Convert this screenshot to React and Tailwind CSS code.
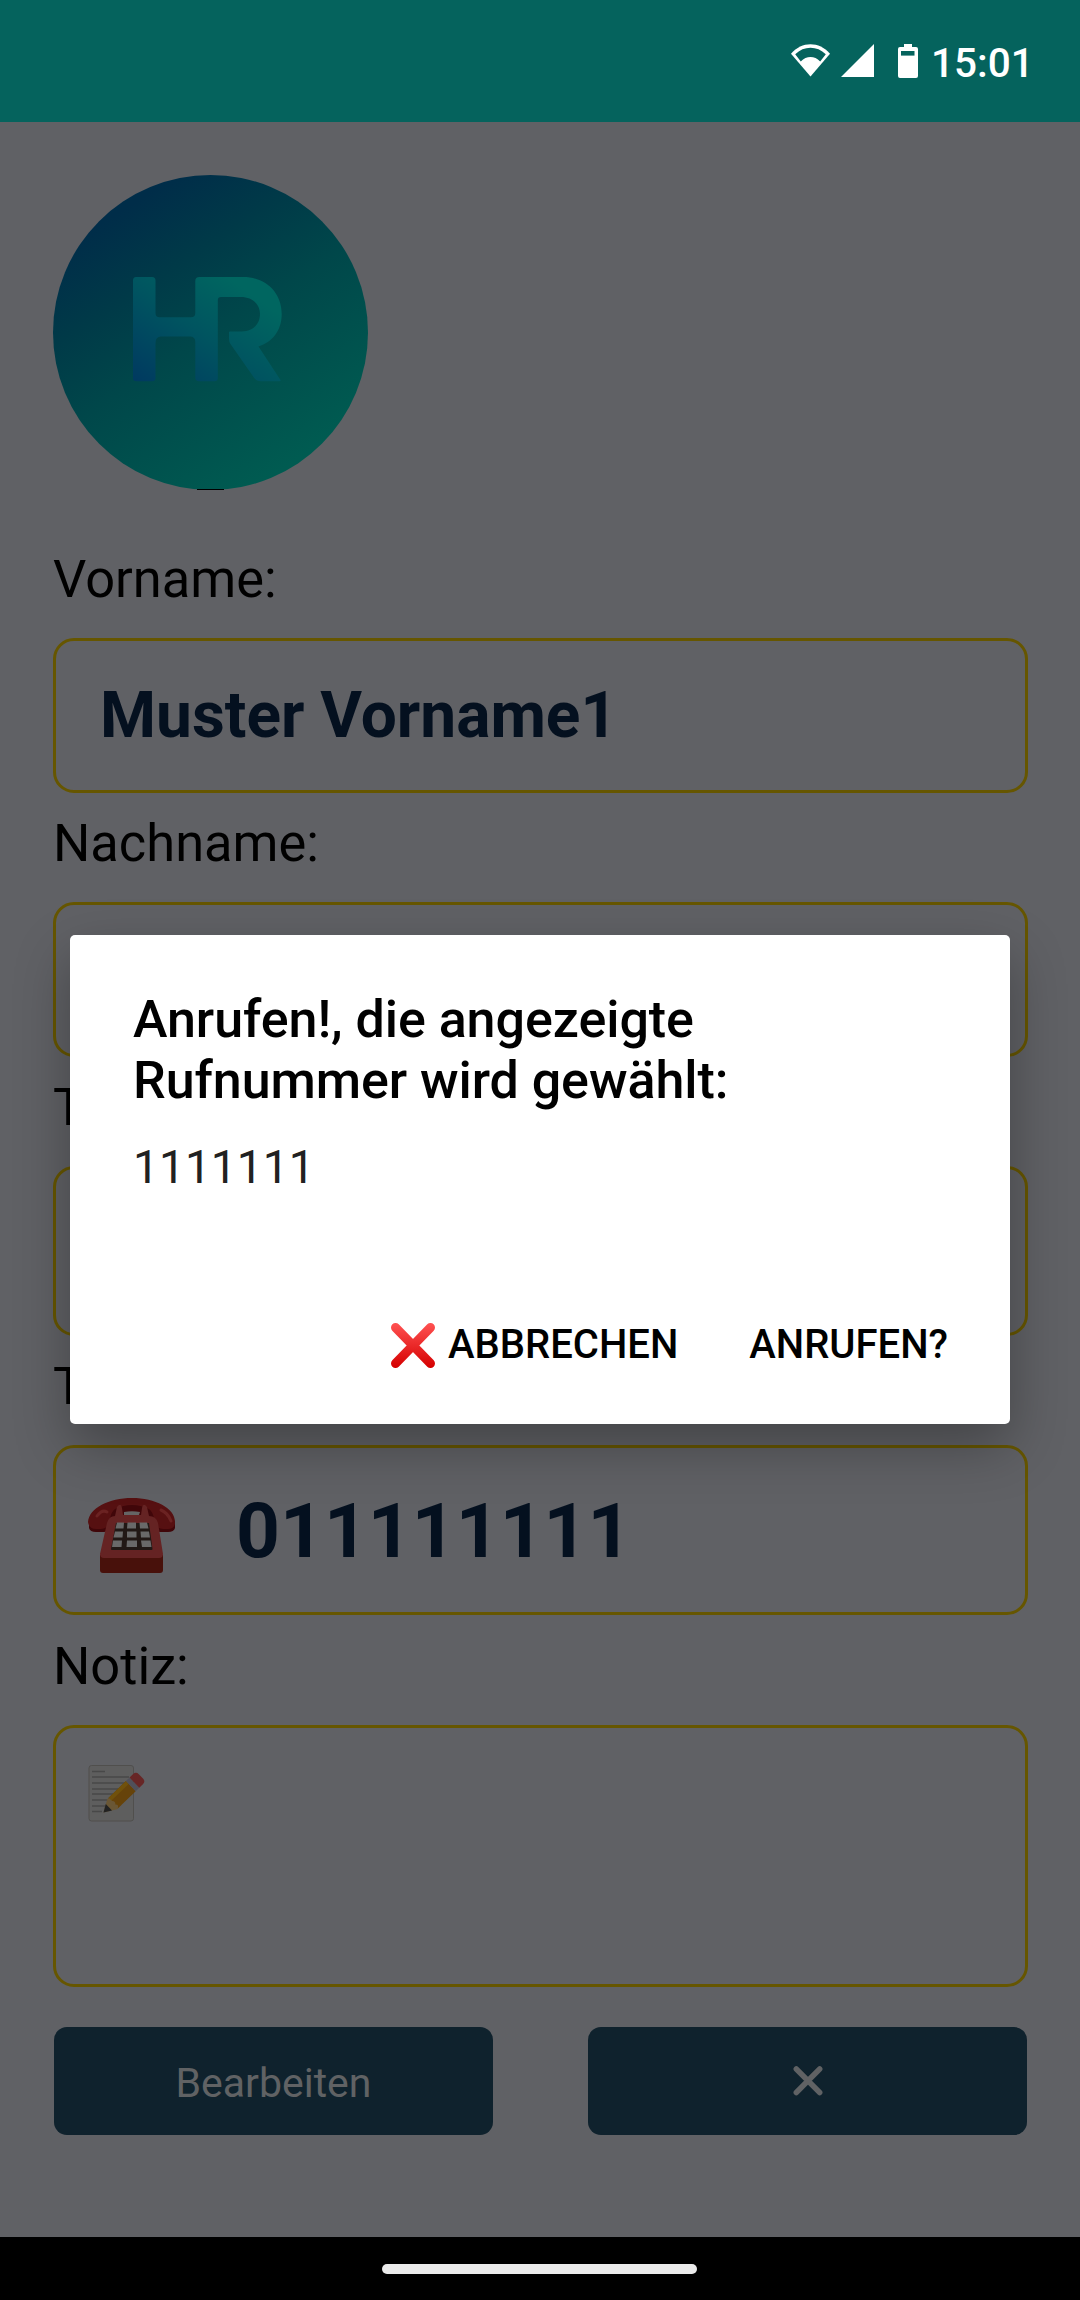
const LABEL = "text-[52.4px] leading-[62px] text-black";
const FIELD = "rounded-[21px] border-[3px] border-[#665600]";

function Wifi() {
  return (
    <svg width="39" height="34" viewBox="0 0 39 34" fill="none">
      <path d="M19.5 32.5 L0 9.8 C11 -2.8 28 -2.8 39 9.8 Z" fill="white" />
      <path d="M9.8 17.5 L4.2 10.3 C13 1.7 26 1.7 34.8 10.3 L29.2 17.5 C23.5 11.6 15.5 11.6 9.8 17.5 Z" fill="#05635d" />
    </svg>
  );
}

function Battery() {
  return (
    <svg width="20" height="34" viewBox="0 0 20 34">
      <path d="M6 0H14V3H18Q20 3 20 5V32Q20 34 18 34H2Q0 34 0 32V5Q0 3 2 3H6Z" fill="white" />
      <rect x="3" y="7" width="13.5" height="4.6" fill="#05635d" />
    </svg>
  );
}

function Logo() {
  return (
    <svg width="315" height="315" viewBox="0 0 315 315">
      <defs>
        <linearGradient id="disc" gradientUnits="userSpaceOnUse" x1="70" y1="35" x2="235" y2="290">
          <stop offset="0" stopColor="#002d49" />
          <stop offset="0.25" stopColor="#003a48" />
          <stop offset="0.5" stopColor="#00474a" />
          <stop offset="1" stopColor="#005b51" />
        </linearGradient>
        <linearGradient id="mono" gradientUnits="userSpaceOnUse" x1="85" y1="207" x2="165" y2="95">
          <stop offset="0" stopColor="#003a60" />
          <stop offset="0.55" stopColor="#005460" />
          <stop offset="1" stopColor="#006660" />
        </linearGradient>
      </defs>
      <circle cx="157.500" cy="157.500" r="157.500" fill="url(#disc)" />
      <rect x="144" y="314" width="27" height="1" fill="black" />
      <path
        fill="url(#mono)"
        d="M83 102H99Q102.500 102 102.500 105.500V138Q102.500 142.300 106.500 142.300H138Q142.300 142.300 142.300 138V106Q142.300 102 146.500 102H190C212 102 228.700 117 228.700 139C228.700 156 219 167 205.500 171.500L227.500 205Q228 206.300 226.500 206.300H208Q203 206.300 200.500 202L177.500 169Q176 166.500 176 164V157Q176 156.500 177 156.500H189C200 156.500 207 149 207 139C207 129 199 122 188 122H168Q164.800 122 164.800 125V203Q164.800 206.300 161.500 206.300H146Q142.300 206.300 142.300 202.500V167Q142.300 161.500 137 161.500H108Q102.500 161.500 102.500 168V203Q102.500 206.300 99 206.300H83.500Q80 206.300 80 203V105.500Q80 102 83 102Z"
      />
    </svg>
  );
}

function Phone() {
  return (
    <svg width="88" height="76" viewBox="0 0 88 76">
      <path d="M12 57H75V72Q75 75 72 75H15Q12 75 12 72Z" fill="#48110b" />
      <path d="M44 1C67 1 87 12 87 27V30Q86 34 80 34H72Q66 34 64 27L60 18H28L24 27Q22 34 16 34H8Q2 34 1 30V27C1 12 21 1 44 1Z" fill="#400609" />
      <path d="M44 0C67 0 87 10 87 24Q87 31 80 31H75Q66 30 66 21Q65 14 61 11Q44 3 27 11Q23 14 22 21Q22 30 13 31H8Q1 31 0 24C1 10 21 0 44 0Z" fill="#561011" />
      <path d="M9 18Q14 11 19 14M83 23Q80 15 73 12" stroke="#6b2222" strokeWidth="3" strokeLinecap="round" fill="none" />
      <path d="M27 18L29 9Q33 4 34 10L35 17H53L54 10Q55 4 59 9L61 18Q68 18 70 25L75 56Q75 60 71 60H16Q12 60 12 56L19 25Q21 18 27 18Z" fill="#652323" />
      <path d="M36 14Q44 12.500 52 14L51 17H36Z" fill="#656565" />
      <path d="M28 25H61L64.500 51Q64.500 52 63.500 52H24Q23 52 23 51Z" fill="#211815" />
      <path d="M29 24.500H36L35.500 30.500H27.500ZM39.500 24.500H48V30.500H39ZM51.500 24.500H59L60.500 30.500H52ZM27 33.500H35L34.500 39.500H25.500ZM39 33.500H48.500V39.500H39ZM52.500 33.500H61L62 39.500H53ZM25 42.500H34L33.500 49H24ZM39 42.500H49V49H38.500ZM53 42.500H62.500L63.500 49H54Z" fill="#696969" />
    </svg>
  );
}

function Memo() {
  return (
    <svg width="60" height="60" viewBox="0 0 60 60">
      <rect x="1" y="1.500" width="44.500" height="55.500" rx="2.500" fill="#5e5e5e" stroke="#504f4d" />
      <path d="M4 7.500H17M4 13H41M4 19H38M4 25H32M4 30H26M4 36H20M4 42H19M4 47.500H14" stroke="#484848" strokeWidth="1.500" />
      <g transform="translate(15.500 48.500) rotate(-44)">
        <path d="M0 0L12 -7H18V7H12Z" fill="#6a5735" />
        <path d="M0 0L7.500 -4.500V4.500Z" fill="#222" />
        <path d="M13 -7H38V7H13Q17 5 14 2.500Q17 0 14 -2.500Q17 -5 13 -7Z" fill="#66430a" />
        <path d="M14 -7H38V-3H14Z" fill="#70510b" />
        <rect x="38" y="-7" width="5" height="14" fill="#50505a" />
        <path d="M43 -7H48Q52 -7 52 -3V3Q52 7 48 7H43Z" fill="#672626" />
      </g>
    </svg>
  );
}

function RedCross() {
  return (
    <svg width="44" height="45" viewBox="0 0 44 45">
      <defs>
        <linearGradient id="cross" gradientUnits="userSpaceOnUse" x1="0" y1="0" x2="0" y2="45">
          <stop offset="0" stopColor="#ff5252" />
          <stop offset="1" stopColor="#d50000" />
        </linearGradient>
      </defs>
      <path d="M4.500 4.500L39.500 40.500M39.500 4.500L4.500 40.500" stroke="url(#cross)" strokeWidth="9" strokeLinecap="round" />
    </svg>
  );
}

export default function App() {
  return (
    <div className="relative flex h-[2300px] w-[1080px] flex-col overflow-hidden bg-[#606165] font-['Roboto',sans-serif]">
      <header className="flex h-[122px] shrink-0 items-start bg-[#05635d] pl-[791px] text-white">
        <div className="mt-[44px]"><Wifi /></div>
        <svg className="mt-[44px] ml-[11px]" width="33" height="33" viewBox="0 0 33 33">
          <path d="M0 33L33 0V33Z" fill="white" />
        </svg>
        <div className="mt-[44px] ml-[24px]"><Battery /></div>
        <span className="mt-[39px] ml-[13px] text-[40.5px] leading-[48px] font-medium">15:01</span>
      </header>

      <main className="flex grow flex-col pt-[53px] pr-[52px] pl-[53px]">
        <Logo />
        <div className={`mt-[58px] ${LABEL}`}>Vorname:</div>
        <div className={`mt-[28px] flex h-[155px] items-center pl-[44px] text-[64px] font-bold text-[#04101f] ${FIELD}`}>
          Muster Vorname1
        </div>
        <div className={`mt-[19px] ${LABEL}`}>Nachname:</div>
        <div className={`mt-[28px] h-[155px] ${FIELD}`} />
        <div className={`mt-[19px] ${LABEL}`}>T</div>
        <div className={`mt-[28px] h-[170px] ${FIELD}`} />
        <div className={`mt-[19px] ${LABEL}`}>T</div>
        <div className={`mt-[28px] flex h-[170px] items-center pl-[32px] ${FIELD}`}>
          <div className="pt-[12px]"><Phone /></div>
          <span className="ml-[60px] pt-[2px] text-[76.6px] font-bold text-[#04101f]">011111111</span>
        </div>
        <div className={`mt-[20px] ${LABEL}`}>Notiz:</div>
        <div className={`mt-[28px] h-[262px] pt-[36px] pl-[32px] ${FIELD}`}>
          <Memo />
        </div>
        <div className="mt-[40px] grid grid-cols-2 gap-x-[95px] px-px text-[41px] text-[#606264]">
          <div className="flex h-[108px] items-center justify-center rounded-[13px] bg-[#0f222d] pt-[5px]">Bearbeiten</div>
          <div className="flex h-[108px] items-center justify-center rounded-[13px] bg-[#0f222d]">
            <svg width="30" height="30" viewBox="0 0 30 30">
              <path d="M3.300 3L26.700 26.500M26.700 3L3.300 26.500" stroke="currentColor" strokeWidth="5.500" strokeLinecap="round" />
            </svg>
          </div>
        </div>
      </main>

      <footer className="h-[63px] shrink-0 bg-black pt-[27px] pl-[382px]">
        <div className="h-[10px] w-[315px] rounded-full bg-[#ebebeb]" />
      </footer>

      <section className="absolute top-[935px] left-[70px] flex h-[489px] w-[940px] flex-col rounded-[5px] bg-white px-[63px] pt-[54px] shadow-[0_22px_55px_rgba(0,0,0,0.3)]">
        <h1 className="text-[52px] leading-[61px] font-medium tracking-[-0.06px] text-black">
          Anrufen!, die angezeigte<br />Rufnummer wird gewählt:
        </h1>
        <p className="mt-[28px] text-[46.2px] leading-[56px] text-[#212121]">1111111</p>
        <div className="mt-[127px] flex items-center justify-end text-[40px] leading-[46px] font-medium text-black">
          <RedCross />
          <span className="ml-[13px]">ABBRECHEN</span>
          <span className="ml-[71px] -mr-px">ANRUFEN?</span>
        </div>
      </section>
    </div>
  );
}
